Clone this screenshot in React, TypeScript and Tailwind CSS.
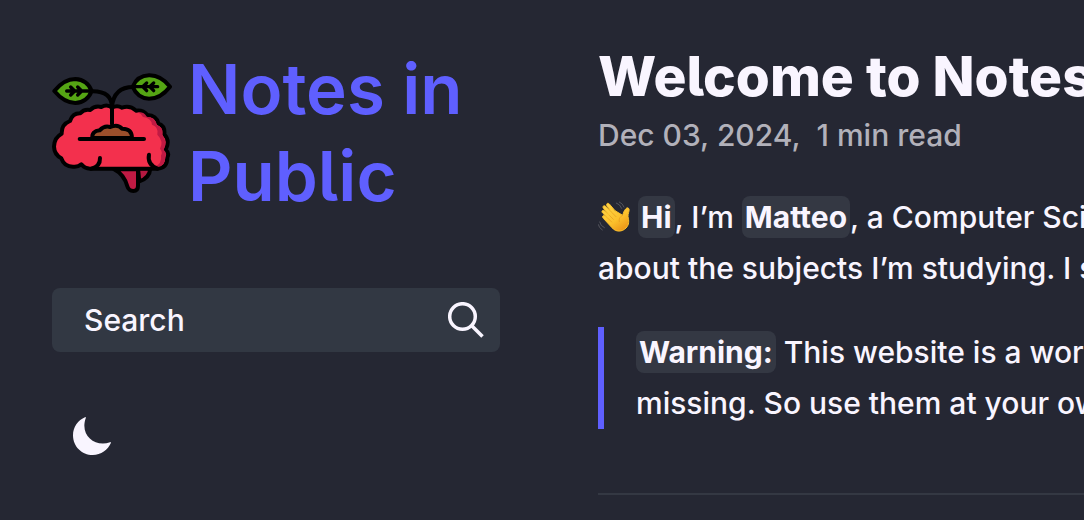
import type { ReactNode } from "react";

function BrainLogo() {
  return (
    <svg viewBox="36 36 360 360" className="size-[120px] shrink-0" aria-hidden="true">
      <g stroke="#000" strokeWidth="12" strokeLinecap="round" strokeLinejoin="round">
        <path d="M294 322 H331 Q329 351 298 361 Z" fill="#b51941" />
        <path d="M222 325 Q252 340 262 376 Q266 390 280 390 Q294 389 294 374 V325 Z" fill="#c01a43" />
        <path
          d="M216 140 Q202 128 184 138 Q164 133 151 147 Q132 143 121 157 Q98 156 90 180 Q64 190 65 218 Q43 229 42 257 Q43 281 64 292 Q73 318 101 317 Q115 318 124 310 Q134 323 150 323 H352 Q382 322 382 289 Q389 277 377 266 Q391 239 373 220 Q376 195 355 187 Q349 163 322 162 Q309 146 288 149 Q270 132 246 140 Q231 132 216 140 Z"
          fill="#f3304d"
        />
      </g>
      <path
        d="M292 154 Q312 151 320 167 Q347 168 350 192 Q371 199 367 222 Q384 242 371 266 Q382 277 376 288 Q376 317 351 318 H342 Q367 311 363 283 Q369 274 360 263 Q372 241 352 221 Q357 198 336 191 Q334 171 309 168 Q304 158 292 154 Z"
        fill="#c01a43"
      />
      <g fill="none" stroke="#000" strokeWidth="12" strokeLinecap="round" strokeLinejoin="round">
        <path d="M154 323 Q181 316 180 291" />
        <path d="M352 323 Q321 310 327 281" />
        <path
          d="M157 231 Q155 210 179 208 Q193 192 211 198 Q233 188 246 203 Q275 202 276 231 Z"
          fill="#9b4f2b"
        />
        <path d="M119 234 H312" />
        <path d="M216 190 V140 Q216 91 158 91 M216 138 Q221 78 280 78" />
        <path d="M43 90 Q72 54 106 54 Q142 56 155 90 Q142 124 106 126 Q72 125 43 90 Z" fill="#55a514" />
        <path d="M278 77 Q292 44 327 43 Q362 42 390 77 Q362 113 327 113 Q292 111 278 77 Z" fill="#55a514" />
        <path d="M154 90 H80 M92 78 L104 90 L92 102 M113 78 L125 90 L113 102" strokeWidth="10" />
        <path d="M279 77 H353 M320 66 L308 77 L320 89 M341 66 L329 77 L341 89" strokeWidth="10" />
      </g>
    </svg>
  );
}

function WavingHand() {
  return (
    <svg
      viewBox="0 0 96 96"
      className="inline-block size-8 align-[-5px]"
      role="img"
      aria-label="Waving hand"
    >
      <defs>
        <linearGradient id="skin" x1="0" y1="0" x2="0.7" y2="1">
          <stop offset="0" stopColor="#ffd64b" />
          <stop offset="0.65" stopColor="#fcc12c" />
          <stop offset="1" stopColor="#ed9819" />
        </linearGradient>
      </defs>
      <path
        d="M51 29 L34 9 C29 4 23 9 27 15 L43 36 L23 16 C17 11 12 17 17 23 L35 44 L20 30 C14 25 9 31 14 36 L31 53 L21 45 C15 41 11 47 16 52 L42 80 C53 94 73 93 84 81 C94 71 93 59 90 47 C89 39 95 29 93 24 C91 19 86 20 83 24 C77 31 77 35 74 43 Z"
        fill="url(#skin)"
        stroke="#fcc12c"
        strokeWidth="3"
        strokeLinejoin="round"
      />
      <path
        d="M43 36 L54 47 M35 44 L46 55 M31 53 L41 63 M74 43 C65 47 62 54 64 62"
        fill="none"
        stroke="#e59a20"
        strokeWidth="2"
        strokeLinecap="round"
      />
      <path
        d="M55 6 Q66 9 71 22 M64 3 Q75 8 78 18 M5 63 Q7 75 19 80 M1 71 Q3 81 13 87"
        fill="none"
        stroke="#55565e"
        strokeWidth="3"
        strokeLinecap="round"
      />
    </svg>
  );
}

function Strong({ children }: { children: ReactNode }) {
  return <strong className="rounded-lg bg-[#343843] px-[3px] py-[3px] font-bold">{children}</strong>;
}

export default function App() {
  return (
    <div className="flex min-h-screen overflow-hidden bg-[#252733] font-['Inter','Liberation_Sans',sans-serif] text-[30px] font-medium text-[#f9f5ff]">
      <aside className="ml-[52px] w-[448px] shrink-0 pt-[46px]">
        <a href="#home" className="flex items-center gap-4 text-[#5f5fff]">
          <BrainLogo />
          <span className="text-[69px] leading-[87px] font-semibold [font-feature-settings:'cv05']">
            Notes in Public
          </span>
        </a>
        <form role="search" className="mt-[68px] flex h-16 items-center rounded-lg bg-[#323843] pr-4 pl-8">
          <input
            type="search"
            aria-label="Search"
            placeholder="Search"
            className="min-w-0 flex-1 bg-transparent outline-none placeholder:text-[#f9f5ff]"
          />
          <button type="submit" aria-label="Submit search" className="shrink-0">
            <svg viewBox="0 0 36 36" className="size-9" fill="none" stroke="currentColor" strokeWidth="3.5">
              <circle cx="14.5" cy="14.5" r="12.8" />
              <path d="M23.5 23.5 L34.5 34.5" />
            </svg>
          </button>
        </form>
        <button type="button" aria-label="Toggle dark mode" className="mt-[65px] ml-[21px] block">
          <svg viewBox="0 0 38 38" className="size-[38px]" fill="currentColor">
            <path d="M12.4 0 C4.8 3.3 0 10.1 0 18.2 C0 29.4 8.7 38 19.8 38 C28 38 34.9 33 38 25.8 C38.3 25.1 37.5 25 37 25.3 C22 30.5 6.5 18.5 12.8 1 Q13 0 12.4 0 Z" />
          </svg>
        </button>
      </aside>
      <main className="ml-[98px] min-w-0 flex-1 overflow-hidden pt-11 whitespace-nowrap">
        <h1 className="text-[55px] leading-[64px] font-extrabold [font-feature-settings:'cv05']">
          Welcome to Notes in Public
        </h1>
        <p className="mt-1 leading-[46px] text-[#b2b1ba]">
          Dec 03, 2024,&nbsp; 1 min read
        </p>
        <p className="mt-[34px] leading-[51px]">
          <WavingHand /> <Strong>Hi</Strong>, I’m <Strong>Matteo</Strong>, a Computer Science student. I write notes
          <br />
          about the subjects I’m studying. I share them here.
        </p>
        <blockquote className="mt-[33px] border-l-[6px] border-[#5f5fff] pl-8 leading-[51px]">
          <Strong>Warning:</Strong> This website is a work in progress and some notes are
          <br />
          missing. So use them at your own risk.
        </blockquote>
        <hr className="mt-16 border-t-2 border-[#343843]" />
      </main>
    </div>
  );
}
